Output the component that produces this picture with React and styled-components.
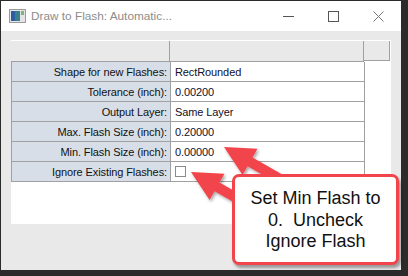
import React from "react";
import styled, { createGlobalStyle } from "styled-components";

const GlobalStyle = createGlobalStyle`
  body {
    margin: 0;
    background: #2b2b2b;
    font-family: "Liberation Sans", Arial, sans-serif;
  }
`;

const Screen = styled.div`
  position: relative;
  width: 408px;
  height: 276px;
  padding: 1px 7px 6px 1px;
  box-sizing: border-box;
  overflow: hidden;
`;

const Window = styled.div`
  display: flex;
  flex-direction: column;
  width: 400px;
  height: 269px;
  background: #e9e9e9;
`;

const TitleBar = styled.div`
  display: flex;
  align-items: center;
  height: 30px;
  background: #ffffff;
  padding-left: 8px;
`;

const Title = styled.span`
  margin-left: 5px;
  font-size: 11.8px;
  color: #8c8c8c;
  flex: 1;
`;

const Controls = styled.div`
  display: flex;
  align-items: center;
  gap: 34px;
  padding-right: 17px;
`;

const Body = styled.div`
  padding: 9px 10px 0 10px;
`;

const Panel = styled.div`
  height: 184px;
  background: #ffffff;
  padding-top: 1px;
  box-sizing: border-box;
`;

const HeaderRow = styled.div`
  display: grid;
  grid-template-columns: 159px 194px 26px;
  height: 20px;
`;

const HeaderCell = styled.div`
  background: #e9e9e9;
  border-right: 1px solid #a0a0a0;
  border-bottom: ${(p) => (p.$last ? "1px solid #a0a0a0" : "none")};
`;

const Grid = styled.div`
  display: grid;
  grid-template-columns: 159px 194px;
  width: 353px;
  border-top: 1px solid #a0a0a0;
  border-left: 1px solid #a0a0a0;
  box-sizing: border-box;
`;

const Cell = styled.div`
  height: 19px;
  display: flex;
  align-items: center;
  justify-content: ${(p) => (p.$label ? "flex-end" : "flex-start")};
  padding: 0 3px 0 4px;
  font-size: 11px;
  letter-spacing: -0.1px;
  color: ${(p) => (p.$label ? "#111" : "#10102a")};
  background: ${(p) => (p.$label ? "#d8dee7" : "#ffffff")};
  border-right: 1px solid #a0a0a0;
  border-bottom: 1px solid #a0a0a0;
  white-space: nowrap;
`;

const Check = styled.span`
  width: 9px;
  height: 9px;
  border: 1px solid #8a8a8a;
  background: #fff;
`;

const Callout = styled.div`
  position: absolute;
  left: 232px;
  top: 174px;
  width: 167px;
  height: 91px;
  box-sizing: border-box;
  border: 3px solid #f2454b;
  border-radius: 7px;
  background: #ffffff;
  box-shadow: 2px 3px 3px rgba(0, 0, 0, 0.35);
  display: flex;
  align-items: center;
  justify-content: center;
  text-align: center;
  font-size: 18px;
  line-height: 21.5px;
  color: #111;
  padding-top: 2px;
`;

const Overlay = styled.svg`
  position: absolute;
  left: 0;
  top: 0;
  pointer-events: none;
`;

const rows = [
  ["Shape for new Flashes:", "RectRounded"],
  ["Tolerance (inch):", "0.00200"],
  ["Output Layer:", "Same Layer"],
  ["Max. Flash Size (inch):", "0.20000"],
  ["Min. Flash Size (inch):", "0.00000"],
  ["Ignore Existing Flashes:", null],
];

const arrow = (tx, ty) => {
  const dx = 0.868;
  const dy = 0.496;
  const px = -dy;
  const py = dx;
  const bx = tx + dx * 30;
  const by = ty + dy * 30;
  const ex = tx + dx * 95;
  const ey = ty + dy * 95;
  const pts = [
    [tx, ty],
    [bx - px * 15, by - py * 15],
    [bx - px * 5, by - py * 5],
    [ex - px * 5, ey - py * 5],
    [ex + px * 5, ey + py * 5],
    [bx + px * 5, by + py * 5],
    [bx + px * 15, by + py * 15],
  ];
  return pts.map((p) => p.join(",")).join(" ");
};

const AppIcon = () => (
  <svg width="17" height="14" viewBox="0 0 17 14">
    <rect x="0.5" y="0.5" width="16" height="13" fill="#e4e4e4" stroke="#9a9a9a" />
    <rect x="2" y="2" width="9" height="10" fill="#3a7f8a" />
    <rect x="2" y="2" width="4" height="10" fill="#2d5fa0" />
    <rect x="12" y="2" width="3" height="4" fill="#7cb87c" />
  </svg>
);

const App = () => {
  return (
    <>
      <GlobalStyle />
      <Screen>
        <Window>
          <TitleBar>
            <AppIcon />
            <Title>Draw to Flash: Automatic...</Title>
            <Controls>
              <svg width="11" height="11" viewBox="0 0 11 11">
                <line x1="0" y1="5.5" x2="11" y2="5.5" stroke="#555" />
              </svg>
              <svg width="11" height="11" viewBox="0 0 11 11">
                <rect x="0.5" y="0.5" width="10" height="10" fill="none" stroke="#555" />
              </svg>
              <svg width="11" height="11" viewBox="0 0 11 11">
                <path d="M0.5 0.5 L10.5 10.5 M10.5 0.5 L0.5 10.5" stroke="#777" />
              </svg>
            </Controls>
          </TitleBar>
          <Body>
            <Panel>
              <HeaderRow>
                <HeaderCell />
                <HeaderCell />
                <HeaderCell $last />
              </HeaderRow>
              <Grid>
                {rows.map(([label, value]) => (
                  <React.Fragment key={label}>
                    <Cell $label>{label}</Cell>
                    <Cell>{value === null ? <Check /> : value}</Cell>
                  </React.Fragment>
                ))}
              </Grid>
            </Panel>
          </Body>
        </Window>
        <Overlay width="408" height="276">
          <defs>
            <filter id="sh" x="-20%" y="-20%" width="140%" height="140%">
              <feDropShadow dx="1.5" dy="2" stdDeviation="1.5" floodColor="#000" floodOpacity="0.35" />
            </filter>
          </defs>
          <polygon points={arrow(224, 147)} fill="#f2454b" filter="url(#sh)" />
          <polygon points={arrow(191, 172)} fill="#f2454b" filter="url(#sh)" />
        </Overlay>
        <Callout>
          <div>
            Set Min Flash to
            <br />
            0.&nbsp; Uncheck
            <br />
            Ignore Flash
          </div>
        </Callout>
      </Screen>
    </>
  );
};

export default App;
